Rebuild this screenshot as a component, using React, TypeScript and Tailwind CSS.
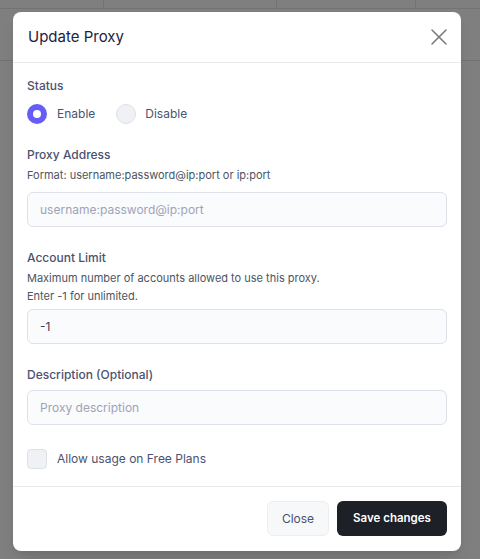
import { X } from 'lucide-react';

function Label({ children }: { children: React.ReactNode }) {
  return <div className="text-[12px] leading-5 font-medium text-[#4b5270]">{children}</div>;
}

function Hint({ children }: { children: React.ReactNode }) {
  return <div className="text-[11px] leading-[18px] text-[#4b5563]">{children}</div>;
}

function TextInput({ placeholder, value }: { placeholder?: string; value?: string }) {
  return (
    <input
      className="h-[35px] w-full rounded-md border border-[#dfe1ea] bg-[#fafbfc] px-3 text-[12px] text-[#374151] outline-none placeholder:text-[#9ea3b8]"
      placeholder={placeholder}
      defaultValue={value}
    />
  );
}

export default function App() {
  return (
    <div
      className="relative h-[559px] w-[480px] overflow-hidden bg-white"
      style={{ fontFamily: 'Inter, "Noto Sans", sans-serif' }}
    >
      {/* page underneath */}
      <div className="grid grid-cols-[104px_173px_139px_64px]">
        <div className="h-[9px] border-r border-b border-[#e5e7eb]" />
        <div className="h-[9px] border-r border-b border-[#e5e7eb]" />
        <div className="h-[9px] border-r border-b border-[#e5e7eb]" />
        <div className="h-[9px] border-b border-[#e5e7eb]" />
        <div className="col-span-4 h-[52px] border-b border-[#e5e7eb]" />
      </div>

      {/* overlay */}
      <div className="absolute inset-0 bg-black/50" />

      {/* modal */}
      <div className="absolute left-[13px] top-[12px] w-[448px] rounded-lg bg-white shadow-lg">
        <div className="flex h-[51px] items-center justify-between border-b border-[#e9eaee] pl-[15px] pr-[8px]">
          <h2 className="text-[15px] font-normal text-[#1c2340]">Update Proxy</h2>
          <X className="h-[28px] w-[28px] text-[#7a7a7a]" strokeWidth={1.3} />
        </div>

        <div className="px-[14px] pt-[13px] pb-[17px]">
          <Label>Status</Label>
          <div className="mt-[8px] flex items-center">
            <span className="flex h-5 w-5 items-center justify-center rounded-full bg-[#655df6]">
              <span className="h-2 w-2 rounded-full bg-white" />
            </span>
            <span className="ml-[10px] text-[12px] text-[#4b5270]">Enable</span>
            <span className="ml-[21px] h-5 w-5 rounded-full border border-[#dde0ea] bg-[#f0f1f5]" />
            <span className="ml-[9px] text-[12px] text-[#4b5270]">Disable</span>
          </div>

          <div className="mt-[21px]">
            <Label>Proxy Address</Label>
            <div className="mt-[1px]">
              <Hint>Format: username:password@ip:port or ip:port</Hint>
            </div>
            <div className="mt-2">
              <TextInput placeholder="username:password@ip:port" />
            </div>
          </div>

          <div className="mt-[21px]">
            <Label>Account Limit</Label>
            <div className="mt-[1px]">
              <Hint>Maximum number of accounts allowed to use this proxy.</Hint>
              <Hint>Enter -1 for unlimited.</Hint>
            </div>
            <div className="mt-1">
              <TextInput value="-1" />
            </div>
          </div>

          <div className="mt-[21px]">
            <Label>Description (Optional)</Label>
            <div className="mt-[5px]">
              <TextInput placeholder="Proxy description" />
            </div>
          </div>

          <div className="mt-[24px] flex items-center">
            <span className="h-5 w-5 rounded border border-[#dde0ea] bg-[#f0f1f5]" />
            <span className="ml-[10px] text-[12px] text-[#4b5270]">Allow usage on Free Plans</span>
          </div>
        </div>

        <div className="flex justify-end gap-2 border-t border-[#e9eaee] px-[14px] pt-[14px] pb-[15px]">
          <button className="h-[35px] w-[62px] rounded-md border border-[#eceef2] bg-[#f7f8fa] text-[12px] text-[#4b5270]">
            Close
          </button>
          <button className="h-[35px] w-[110px] rounded-md bg-[#1e2028] text-[11.5px] font-semibold text-white">
            Save changes
          </button>
        </div>
      </div>
    </div>
  );
}
